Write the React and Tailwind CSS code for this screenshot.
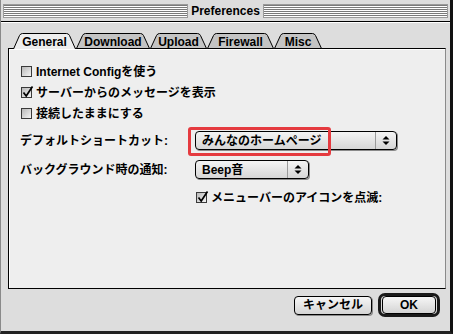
import React from 'react';

const font = { fontFamily: '"Liberation Sans","Noto Sans CJK JP",sans-serif' };

const tabs = [
  { label: 'General', w: 63, active: true },
  { label: 'Download', w: 74 },
  { label: 'Upload', w: 57 },
  { label: 'Firewall', w: 67 },
  { label: 'Misc', w: 48 },
];

function Tab({ label, w, active }) {
  const h = 16;
  const sides = `M0.5 ${h} L6.5 2.5 Q7.5 0.5 9.5 0.5 L${w - 9.5} 0.5 Q${w - 7.5} 0.5 ${w - 6.5} 2.5 L${w - 0.5} ${h}`;
  return (
    <div
      className={`relative h-[16px] flex items-center justify-center ${active ? 'z-20' : 'z-10'}`}
      style={{ width: w }}
    >
      <svg className="absolute inset-0" width={w} height={h}>
        {active ? (
          <>
            <path d={`${sides} Z`} fill="#eeeeee" />
            <path d={sides} fill="none" stroke="#000" strokeWidth="1" />
          </>
        ) : (
          <path d={`M0.5 15.5 L6.5 2.5 Q7.5 0.5 9.5 0.5 L${w - 9.5} 0.5 Q${w - 7.5} 0.5 ${w - 6.5} 2.5 L${w - 0.5} 15.5 Z`} fill="#c4c4c4" stroke="#000" strokeWidth="1" />
        )}
      </svg>
      <span className="relative text-[12px] font-bold leading-none text-black pt-px">{label}</span>
    </div>
  );
}

function Checkbox({ checked }) {
  return (
    <div className="relative w-[11px] h-[11px] shrink-0 border border-[#3a3a3a] bg-[linear-gradient(135deg,#b8b8b8,#f4f4f4)]">
      {checked && (
        <svg className="absolute -left-px -top-[3px]" width="13" height="14">
          <path d="M2.5 7.5 L5.2 11 L11.5 1.5" fill="none" stroke="#000" strokeWidth="1.7" />
        </svg>
      )}
    </div>
  );
}

function CheckRow({ checked, children, className = '' }) {
  return (
    <div className={`flex items-center gap-[4px] ${className}`}>
      <Checkbox checked={checked} />
      <span className="text-[12px] font-bold leading-none text-black">{children}</span>
    </div>
  );
}

function Arrows() {
  return (
    <svg width="8" height="11">
      <path d="M0.5 4.5 L4 1 L7.5 4.5 Z" fill="#000" />
      <path d="M0.5 6.5 L4 10 L7.5 6.5 Z" fill="#000" />
    </svg>
  );
}

function Popup({ value, width }) {
  return (
    <div
      className="flex h-[19px] rounded-[4px] border border-black bg-[linear-gradient(#f4f4f4,#d6d6d6)] shadow-[1px_1px_0_#8a8a8a]"
      style={{ width }}
    >
      <div className="flex-1 flex items-center pl-[6px] text-[12px] font-bold leading-none text-black">{value}</div>
      <div className="w-[21px] flex items-center justify-center border-l border-[#9a9a9a]">
        <Arrows />
      </div>
    </div>
  );
}

function Button({ children, def }) {
  const inner = (
    <div className="w-[54px] h-[18px] rounded-[4px] border border-black bg-[linear-gradient(#f6f6f6,#d4d4d4)] flex items-center justify-center text-[12px] font-bold leading-none text-black">
      {children}
    </div>
  );
  if (def) {
    return (
      <div className="w-[62px] h-[24px] rounded-[7px] border-[3px] border-[#1a1a1a] bg-[#dddddd] flex items-center justify-center">
        {inner}
      </div>
    );
  }
  return (
    <div className="w-[78px] h-[19px] rounded-[4px] border border-black bg-[linear-gradient(#f6f6f6,#d4d4d4)] shadow-[1px_1px_0_#8a8a8a] flex items-center justify-center text-[12px] font-bold leading-none text-black">
      {children}
    </div>
  );
}

const stripes = 'h-[14px] bg-[repeating-linear-gradient(to_bottom,#7a7a7a_0px,#7a7a7a_1px,#ffffff_1px,#ffffff_2px)] border border-[#9a9a9a]';

export default function App() {
  return (
    <div className="w-[453px] h-[334px] bg-[#dddddd] flex flex-col border-l border-[#8a8a8a] border-r-[3px] border-r-[#111] border-b-[3px] border-b-[#222]" style={font}>
      <div className="h-[22px] flex items-center px-[2px] border-b border-black bg-[#dddddd]">
        <div className={`flex-1 ${stripes}`} />
        <span className="px-[3px] text-[12px] font-bold leading-none text-black">Preferences</span>
        <div className={`flex-1 ${stripes}`} />
      </div>

      <div className="flex-1 flex flex-col pl-[7px] pt-[11px] border-t border-white">
        <div className="flex pl-[5px] -mb-px relative z-10 -mt-px">
          {tabs.map((t) => (
            <Tab key={t.label} {...t} />
          ))}
        </div>

        <div className="relative w-[438px] h-[241px] bg-[#eeeeee] border border-black border-r-[#8a8a8a] shadow-[inset_1px_1px_0_#ffffff] pl-[11px] pt-[12px]">
          <div className="flex flex-col">
            <CheckRow className="h-[21px] pl-px">Internet Configを使う</CheckRow>
            <CheckRow checked className="h-[21px] pl-px">サーバーからのメッセージを表示</CheckRow>
            <CheckRow className="h-[21px] pl-px">接続したままにする</CheckRow>
          </div>

          <div className="mt-[7px] flex items-center">
            <span className="w-[175px] text-[12px] font-bold leading-none text-black">デフォルトショートカット:</span>
            <Popup value="みんなのホームページ" width={202} />
          </div>
          <div className="mt-[10px] flex items-center">
            <span className="w-[175px] text-[12px] font-bold leading-none text-black">バックグラウンド時の通知:</span>
            <Popup value="Beep音" width={114} />
          </div>
          <CheckRow checked className="mt-[9px] h-[19px] pl-[176px]">メニューバーのアイコンを点滅:</CheckRow>

          <div className="absolute left-[179px] top-[78px] w-[143px] h-[29px] rounded-[3px] border-[3px] border-[#e53a3f]" />
        </div>

        <div className="flex justify-end items-center gap-[6px] pr-[10px] mt-[4px]">
          <Button>キャンセル</Button>
          <Button def>OK</Button>
        </div>
      </div>
    </div>
  );
}
